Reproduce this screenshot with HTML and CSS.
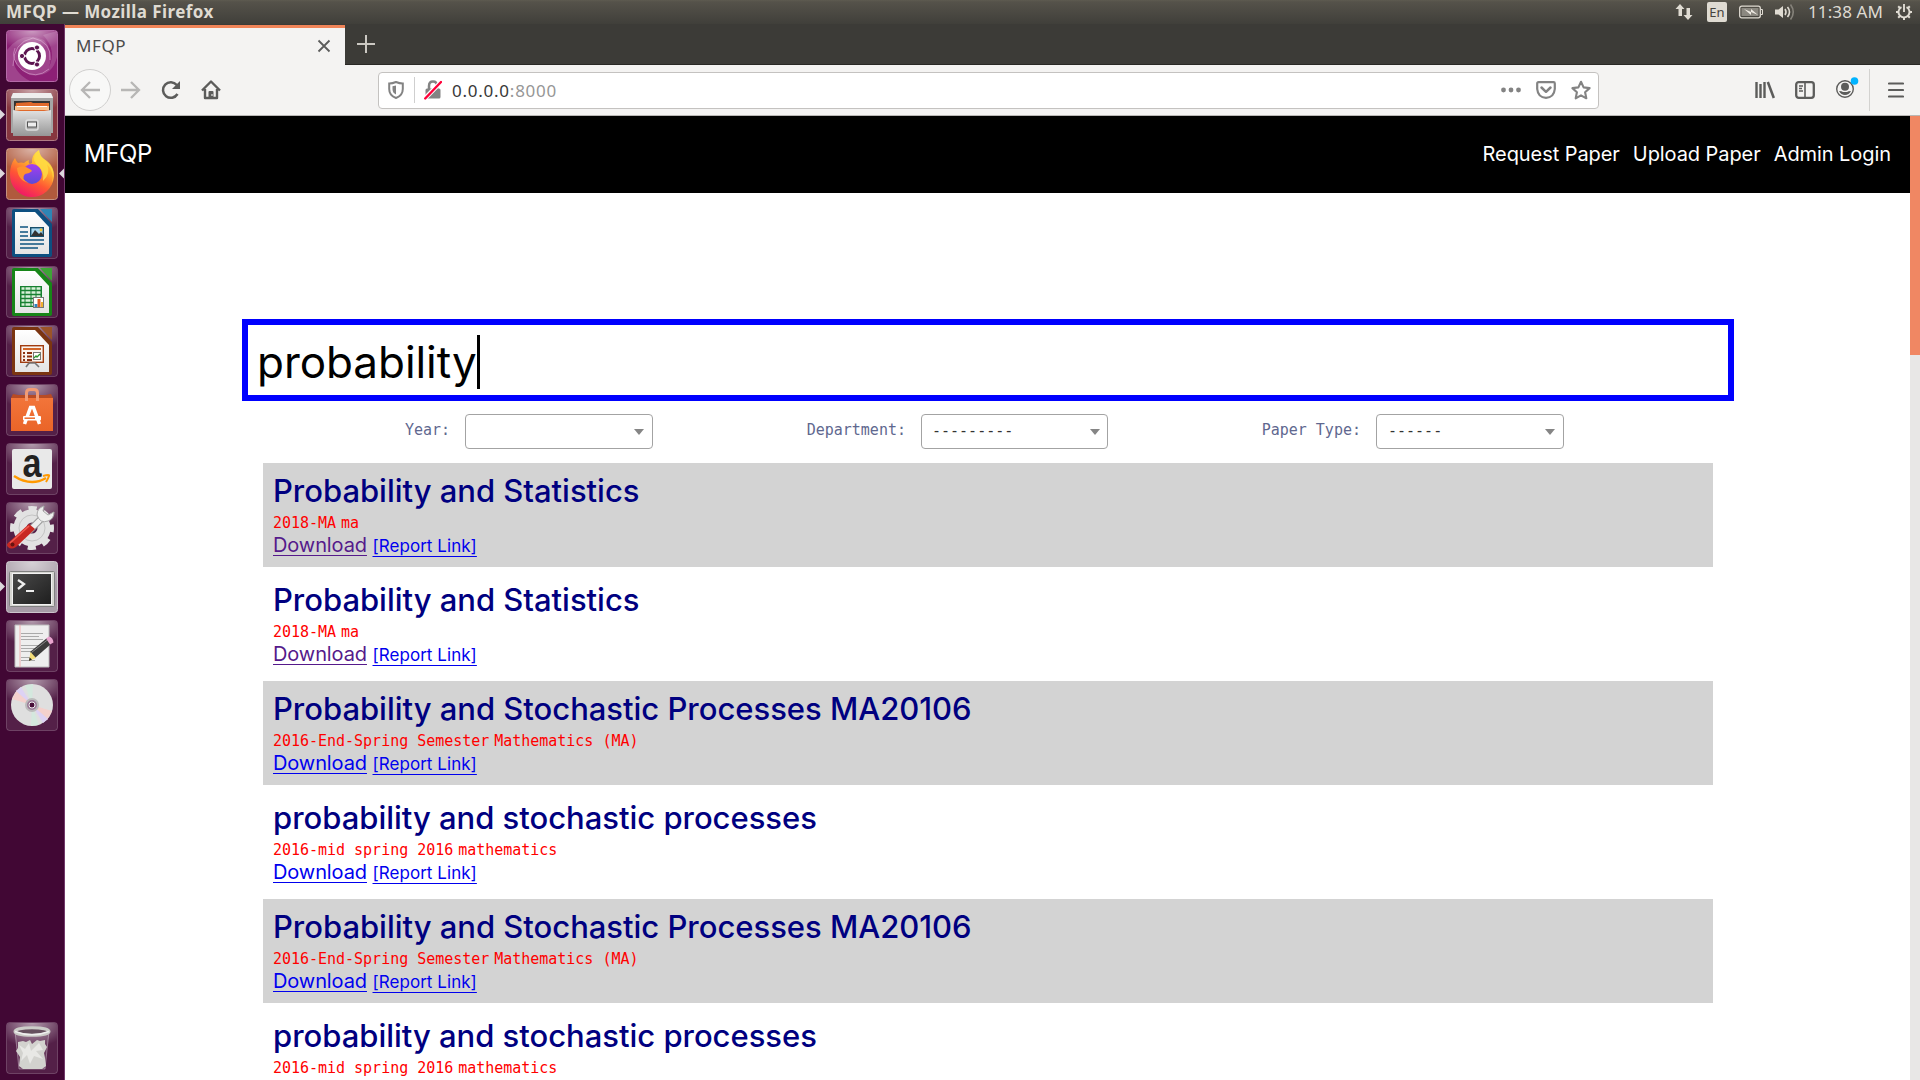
FILE: index.html
```html
<!DOCTYPE html>
<html lang="en">
<head>
<meta charset="utf-8">
<title>MFQP</title>
<link rel="stylesheet" href="styles.css">
</head>
<body>
<svg class="defs" width="0" height="0" aria-hidden="true">
  <defs>
    <radialGradient id="gloss" cx=".5" cy="0" r=".75"><stop offset="0" stop-color="#fff" stop-opacity=".55"/><stop offset="1" stop-color="#fff" stop-opacity="0"/></radialGradient>
    <linearGradient id="silver" x1="0" y1="0" x2="0" y2="1"><stop offset="0" stop-color="#e2e2e2"/><stop offset="1" stop-color="#969696"/></linearGradient>
    <linearGradient id="paper" x1="0" y1="0" x2="0" y2="1"><stop offset="0" stop-color="#fff"/><stop offset="1" stop-color="#e4e4e4"/></linearGradient>
    <linearGradient id="flame" x1=".8" y1="0" x2=".3" y2="1"><stop offset="0" stop-color="#fff44f"/><stop offset=".35" stop-color="#ffb02e"/><stop offset=".65" stop-color="#ff5634"/><stop offset="1" stop-color="#f0146a"/></linearGradient>
    <linearGradient id="globe" x1="0" y1="0" x2="0" y2="1"><stop offset="0" stop-color="#a63df0"/><stop offset="1" stop-color="#5a4bd8"/></linearGradient>
    <linearGradient id="bag" x1="0" y1="0" x2="0" y2="1"><stop offset="0" stop-color="#f2753a"/><stop offset="1" stop-color="#ea6428"/></linearGradient>
    <linearGradient id="screen" x1="0" y1="0" x2="1" y2="1"><stop offset="0" stop-color="#4a4a4a"/><stop offset="1" stop-color="#1e1e1e"/></linearGradient>
    <g id="tile"><rect x="6.5" y=".5" width="51" height="51" rx="3" fill="#fff" fill-opacity=".1" stroke="#fff" stroke-opacity=".2"/><rect x="7" y="1" width="50" height="32" rx="3" fill="url(#gloss)"/></g>
    <g id="running"><path d="M0 20.500 5 25.500 0 30.500z" fill="#dcd8dc"/></g>
  </defs>
</svg>

<header class="panel">
  <span class="panel-title">MFQP — Mozilla Firefox</span>
  <div class="indicators">
    <svg class="ind-net" width="18" height="18" viewBox="0 0 18 18"><path d="M0.500 6 5 1l4.500 5H7v7H3.500V6zM8.500 12 13 17l4.500-5H15V5h-3.500v7z" fill="#dfdbd2"/></svg>
    <span class="ind-lang">En</span>
    <svg class="ind-battery" width="24" height="14" viewBox="0 0 24 14"><rect x=".7" y="1.200" width="20.600" height="11.600" rx="2" fill="none" stroke="#dfdbd2" stroke-width="1.300"/><rect x="2.500" y="3" width="17" height="8" fill="#8b8880"/><path d="M22 4.500h1.500v5H22" fill="none" stroke="#dfdbd2"/><path d="m5 4 7 3V4l7 6-7-3v3z" fill="#eeeae2"/></svg>
    <svg class="ind-sound" width="21" height="18" viewBox="0 0 21 18"><path d="M0 6.500h3.500L8 3v12l-4.500-3.500H0z" fill="#dfdbd2"/><path d="M10 6q2 3 0 6M12.500 4q4 5 0 10" fill="none" stroke="#dfdbd2" stroke-width="1.600"/><path d="M15.500 1.500q5.500 7.500 0 15" fill="none" stroke="#85827a" stroke-width="1.600"/></svg>
    <span class="ind-clock">11:38 AM</span>
    <svg class="ind-gear" width="18" height="18" viewBox="0 0 18 18" fill="none" stroke="#dfdbd2"><path d="M6.500 4.100a5.500 5.500 0 1 0 5 0" stroke-width="1.900"/><path d="M9 1v8" stroke-width="1.900"/><path d="M1 9h2.500M14.500 9H17M9 14.500V17M3.200 3.200l2 2M14.800 3.200l-2 2M3.200 14.800l2-2M14.800 14.800l-2-2" stroke-width="2"/></svg>
  </div>
</header>

<div class="desktop">
  <nav class="launcher">
    <!-- Dash -->
    <svg viewBox="0 0 64 52"><rect x="6.500" y=".5" width="51" height="51" rx="3" fill="#8d2076" stroke="#b56aa8"/><path d="M7 20Q22 0 44 10 54 22 49 37 57 20 43 5L57 1v26Q52 48 30 45 16 39 13 25 12 42 30 51H7z" fill="#fff" opacity=".16"/><path d="M13 36Q13 12 33 8 52 12 50 30M49 39Q36 50 22 40 10 29 15 18" fill="none" stroke="#dca4d2" opacity=".6"/><rect x="7" y="1" width="50" height="25" rx="3" fill="url(#gloss)"/><circle cx="32" cy="26" r="14" fill="#fff"/><circle cx="32" cy="26" r="7.500" fill="none" stroke="#5c1450" stroke-width="3"/><path d="M32 26H20M32 26l6-10M32 26l6 10" stroke="#fff" stroke-width="1.500"/><circle cx="32" cy="26" r="5.500" fill="#fff"/><g fill="#5c1450" stroke="#fff"><circle cx="22" cy="26" r="2.600"/><circle cx="37" cy="17.500" r="2.600"/><circle cx="37" cy="34.500" r="2.600"/></g></svg>
    <!-- Files -->
    <svg viewBox="0 0 64 52"><rect x="6.500" y=".5" width="51" height="51" rx="3" fill="#87363f" stroke="#b07c84"/><rect x="7" y="1" width="50" height="30" fill="url(#gloss)"/><path d="M13 4h38l2 4v36H11V8z" fill="#a5a5a5"/><path d="M13 4h38l2 5H11z" fill="#eee"/><rect x="14" y="12" width="36" height="10" fill="#333"/><path d="m16 14 15-1 2 1h16v8H15z" fill="#e0692b"/><path d="M15 17h34v4H15z" fill="#f8c08c"/><path d="M17 17.500h30" stroke="#fff"/><path d="m13 21 7 1h24l7-1v26H13z" fill="url(#silver)"/><rect x="26" y="31" width="12" height="10" rx="2" fill="none" stroke="#ddd" stroke-width="1.500"/><rect x="27.500" y="33" width="9" height="5" fill="#eee" stroke="#555"/><use href="#running"/></svg>
    <!-- Firefox -->
    <svg viewBox="0 0 64 52"><rect x="6.500" y=".5" width="51" height="51" rx="3" fill="#b05a3d" stroke="#c4917f"/><rect x="7" y="1" width="50" height="30" fill="url(#gloss)"/><path d="M15 10q1 3 3 5 3-1 6 0 2-2 5-3-1 3 1 4l2-1q-1-8 7-13 1 7 6 10 9 8 9 16A22 22 0 0 1 10 26q0-9 5-16z" fill="url(#flame)"/><circle cx="32" cy="26" r="10" fill="url(#globe)"/><path d="M17 20q5-3 9-1 6 3 6 4-3 3-7 3-5 5 4 9-11-2-12-15z" fill="#ff922e"/><path d="M38 3q-7 6-2 13 9 7 7 17 8-7 4-17 8 8 5 19 5-14-5-22-8-5-9-10z" fill="#ffdb42" opacity=".85"/><use href="#running"/><path d="m64 20.500-5 5 5 5z" fill="#dcd8dc"/></svg>
    <!-- Writer -->
    <svg viewBox="0 0 64 52"><use href="#tile"/><path d="M14 2h24l14 15v31q0 2-2 2H14q-2 0-2-2V4q0-2 2-2z" fill="#0d4f80"/><path d="M40 2h12v13z" fill="#2e85b5"/><path d="M15 5h20l14 15v27H15z" fill="url(#paper)"/><path d="M20 20h8M20 25h8M20 29h8M20 33h24M20 37h24M20 41h18" stroke="#0e5480" stroke-width="1.700"/><rect x="30.700" y="20.700" width="12.600" height="8.600" fill="#a7d8f0" stroke="#174f6b" stroke-width="1.400"/><path d="m31 29 4-6 4 4 2-2 3 4z" fill="#333"/><circle cx="41" cy="23" r="1.400" fill="#f6c532"/></svg>
    <!-- Calc -->
    <svg viewBox="0 0 64 52"><use href="#tile"/><path d="M14 2h24l14 15v31q0 2-2 2H14q-2 0-2-2V4q0-2 2-2z" fill="#178518"/><path d="M40 2h12v13z" fill="#3ea436"/><path d="M15 5h20l14 15v27H15z" fill="url(#paper)"/><path d="M20 20h22v21H20z" fill="#178030"/><path d="M21.500 22.500h19M21.500 26.500h19M21.500 30.500h19M21.500 34.500h19M21.500 38.500h19" stroke="#d8f0d8" stroke-width="2.500"/><path d="M25 20v20M31 20v20M36 20v20" stroke="#178030"/><rect x="33.500" y="31.500" width="10" height="10" fill="#fff" stroke="#777"/><path d="M36 38v3" stroke="#2e83c0" stroke-width="3"/><path d="M39 33v8" stroke="#e05a20" stroke-width="3"/><path d="M42 36v5" stroke="#f0b030" stroke-width="2"/></svg>
    <!-- Impress -->
    <svg viewBox="0 0 64 52"><use href="#tile"/><path d="M14 2h24l14 15v31q0 2-2 2H14q-2 0-2-2V4q0-2 2-2z" fill="#7b3511"/><path d="M40 2h12v13z" fill="#9b5428"/><path d="M15 5h20l14 15v27H15z" fill="url(#paper)"/><rect x="20.700" y="20.700" width="22.600" height="16.600" fill="#faf4ee" stroke="#a13c10" stroke-width="1.400"/><path d="M23 24h18" stroke="#d26528" stroke-width="2"/><path d="M23 28h2M27 28h5M23 31.500h2M27 31.500h5M23 35h2M27 35h5" stroke="#8b3210" stroke-width="2"/><rect x="33.500" y="27.500" width="7" height="7" fill="#fff" stroke="#777"/><path d="m34 33 2-2 1 1 3-3" stroke="#29952d" fill="none" stroke-width="1.300"/><path d="M29 38h6l4 4M29 38l-3 4" stroke="#777" fill="none" stroke-width="1.700"/></svg>
    <!-- Ubuntu Software -->
    <svg viewBox="0 0 64 52"><use href="#tile"/><path d="m13 10 5 1h28l5-1 2 4H11z" fill="#b84b24"/><path d="M11 14h42v33H11z" fill="url(#bag)"/><path d="M26.500 17V9q0-3.500 3.500-3.500h4q3.500 0 3.500 3.500v8" fill="none" stroke="#f29b74" stroke-width="3"/><path d="m24.500 40 6-16.500h3l6 16.500" fill="none" stroke="#fff" stroke-width="3.500"/><rect x="23" y="32" width="18" height="4.500" rx="1" fill="#fff"/><path d="M24.500 34.200H35" stroke="#ed6b2d" stroke-width="1.500"/></svg>
    <!-- Amazon -->
    <svg viewBox="0 0 64 52"><use href="#tile"/><rect x="12" y="6" width="40" height="40" rx="2" fill="#e9e9e9"/><text x="32" y="34" text-anchor="middle" textLength="19" lengthAdjust="spacingAndGlyphs" class="amazon-letter">a</text><path d="M14 33q17 11 32 2" fill="none" stroke="#f90" stroke-width="2.500"/><path d="M43 33q7-2 6 0-1 3-3 6" fill="none" stroke="#f90" stroke-width="2"/></svg>
    <!-- Settings -->
    <svg viewBox="0 0 64 52"><use href="#tile"/><circle cx="32" cy="26" r="12" fill="none" stroke="#e2e2e2" stroke-width="13"/><circle cx="32" cy="26" r="19" fill="none" stroke="#e2e2e2" stroke-width="6" stroke-dasharray="8 6.920" stroke-dashoffset="4"/><circle cx="32" cy="26" r="13" fill="none" stroke="#c4c4c4"/><path d="m29 29 13-13" stroke="#999" stroke-width="7"/><path d="m27 31 15-15" stroke="#eee" stroke-width="5"/><path d="M44 4q-7 2-7 9 3 9 11 6 6-2 6-9l-6 3-5-4z" fill="#eee" stroke="#aaa"/><path d="m8 41 21-19 6 5-19 18q-5 3-8 0-2-2 0-4z" fill="#c82822"/><path d="m10 41 19-17" stroke="#f05b50" stroke-width="1.600"/><circle cx="12.500" cy="42.500" r="2" fill="#681310"/></svg>
    <!-- Terminal -->
    <svg viewBox="0 0 64 52"><rect x="6.500" y=".5" width="51" height="51" rx="3" fill="#a69ba6" stroke="#ccc4cc"/><rect x="7" y="1" width="50" height="40" fill="url(#gloss)"/><rect x="9.500" y="10.500" width="45" height="35" rx="1" fill="#d6d6d2" stroke="#808080"/><rect x="12.500" y="12.500" width="39" height="31" fill="url(#screen)" stroke="#f2f2f2"/><path d="m18 19 6 4-6 5" fill="none" stroke="#eee" stroke-width="2.300"/><path d="M26 30h8" stroke="#eee" stroke-width="2"/><use href="#running"/></svg>
    <!-- Text editor -->
    <svg viewBox="0 0 64 52"><use href="#tile"/><path d="M15 5h34v42H15z" fill="#eee" stroke="#bbb"/><path d="M20 5v42" stroke="#f0b0b0"/><path d="M21 13.500h22M21 16.500h18M21 19.500h22M21 25.500h20M21 28.500h20M21 31.500h14M21 37.500h12M21 40.500h14" stroke="#aaa"/><path d="m30 32 17-14 4 6-16 14z" fill="#3c3c3c"/><path d="m31.500 32.500 16.500-13" stroke="#888"/><path d="m29 41 1.500-9 5.500 6z" fill="#f3dd78"/><path d="m29 41 .6-3.500 2.400 2z" fill="#222"/><path d="m46 18.500 3-2q4 1 4.500 6l-3.500 2z" fill="#e9a4cf"/></svg>
    <!-- Disc -->
    <svg viewBox="0 0 64 52"><use href="#tile"/><circle cx="32" cy="26" r="21" fill="#dfdfdf"/><path d="M32 26 12 20l5-9zM32 26l20 6-5 9z" fill="#f4d1cd"/><path d="m32 26-7-20 8-1zM32 26l7 20-8 1z" fill="#cdeedd" opacity=".6"/><path d="M32 26 16 12l5-4zM32 26l16 14-5 4z" fill="#ddd2f4"/><circle cx="32" cy="26" r="6" fill="#9b7b98" stroke="#bbb" stroke-width="2"/><circle cx="32" cy="26" r="3" fill="#481038" stroke="#eee"/></svg>
    <!-- Trash -->
    <svg class="trash" viewBox="0 0 64 52"><use href="#tile"/><path d="M15 9h34l-4 38H19z" fill="#fff" fill-opacity=".13" stroke="#fff" stroke-opacity=".35"/><path d="m18 20 5-1 3 1 4-2 2 4 5-4 3 1 5-1v4l2 3-3 6 1 5 1 8-4 3H23l-4-3 1-9-4-6 2-3z" fill="#d2d2ce"/><path d="m19 23 6 4 4-6 2 8 8-8 4 7-7 1 7 8-9-3-4 8-3-9-6 6 2-8z" fill="#e8e8e5"/><ellipse cx="32" cy="9.500" rx="17" ry="3.800" fill="#66505f" stroke="#ccccc8" stroke-width="3"/><path d="M15 9.500Q32 16 49 9.500" fill="none" stroke="#eee" stroke-width="1.500"/></svg>
  </nav>

  <main class="browser">
    <div class="tabbar">
      <div class="tab"><span>MFQP</span><svg width="14" height="14" viewBox="0 0 14 14"><path d="m1.500 1.500 11 11m0-11-11 11" stroke="#5c5c5b" stroke-width="1.800"/></svg></div>
      <svg class="newtab" width="18" height="18" viewBox="0 0 18 18"><path d="M9 0v18M0 9h18" stroke="#cbc8c2" stroke-width="2"/></svg>
    </div>
    <div class="toolbar">
      <div class="nav-buttons">
        <span class="back"><svg width="20" height="20" viewBox="0 0 20 20"><path d="M20 10H2m8-8-8 8 8 8" fill="none" stroke="#b7b6b5" stroke-width="2.300"/></svg></span>
        <svg width="20" height="20" viewBox="0 0 20 20"><path d="M0 10h18m-8-8 8 8-8 8" fill="none" stroke="#b7b6b5" stroke-width="2.300"/></svg>
        <svg width="20" height="20" viewBox="0 0 20 20"><path d="M16.500 14A7.800 7.800 0 1 1 15.800 5" fill="none" stroke="#5c5c5b" stroke-width="2.500"/><path d="M19 1v8h-8z" fill="#5c5c5b"/></svg>
        <svg width="20" height="20" viewBox="0 0 20 20"><path d="M1 10.500 10 1.500l9 9M4 9v9h12V9" fill="none" stroke="#5c5c5b" stroke-width="2.400" stroke-linejoin="round"/><path d="M7.500 18v-6q0-1 1-1h3q1 0 1 1v6z" fill="#5c5c5b"/><path d="M10.500 14h1v2h-1z" fill="#fff"/></svg>
      </div>
      <div class="urlbar">
        <svg class="shield" width="16" height="18" viewBox="0 0 16 18"><path d="M8 1q3.500 1.500 6.800 1.500V8q0 6.500-6.800 9Q1.200 14.500 1.200 8V2.500Q4.500 2.500 8 1z" fill="none" stroke="#838383" stroke-width="2"/><path d="M8 4.500v9Q4.500 12 4.500 8V5.200z" fill="#838383"/></svg>
        <span class="url-divider"></span>
        <svg class="lock" width="18" height="20" viewBox="0 0 18 20"><path d="M5 9V6q0-4.500 4-4.500T13 6v3" fill="none" stroke="#838383" stroke-width="2.500"/><rect x="1.500" y="8.500" width="15" height="10" rx="1.500" fill="#838383"/><path d="M.8 18.500 17 2" stroke="#fff" stroke-width="4.500"/><path d="M1.200 18.500 17 2" stroke="#ff0039" stroke-width="2.400" stroke-linecap="round"/></svg>
        <span class="url">0.0.0.0<i>:8000</i></span>
        <svg class="dots" width="20" height="6" viewBox="0 0 20 6" fill="#838383"><circle cx="2.500" cy="3" r="2.400"/><circle cx="10" cy="3" r="2.400"/><circle cx="17.500" cy="3" r="2.400"/></svg>
        <svg class="pocket" width="20" height="18" viewBox="0 0 20 18"><path d="M2.500 1.200h15q1.300 0 1.300 1.300V8Q18 16.500 10 16.800 2 16.500 1.200 8V2.500q0-1.300 1.300-1.300z" fill="none" stroke="#838383" stroke-width="2.200"/><path d="m5.500 6.500 4.500 4.300 4.500-4.300" fill="none" stroke="#838383" stroke-width="2.500" stroke-linecap="round" stroke-linejoin="round"/></svg>
        <svg width="20" height="20" viewBox="0 0 20 20"><path d="m10 1.800 2.600 5.600 6 .7-4.500 4.100 1.200 6.100-5.300-3-5.300 3 1.200-6.100L1.400 8.100l6-.7z" fill="none" stroke="#838383" stroke-width="2.100" stroke-linejoin="round"/></svg>
      </div>
      <div class="tools">
        <svg width="20" height="18" viewBox="0 0 20 18"><path d="M1.500 1v16M5.500 3v14M9.500 1v16" stroke="#5c5c5b" stroke-width="2.400"/><path d="m12.800 1 6 16" stroke="#5c5c5b" stroke-width="2.500"/></svg>
        <svg width="20" height="18" viewBox="0 0 20 18"><rect x="1.200" y="1.200" width="17.600" height="15.600" rx="2.500" fill="none" stroke="#5c5c5b" stroke-width="2.300"/><path d="M10 1v16" stroke="#5c5c5b" stroke-width="1.600"/><path d="M4 5h4M4 7.500h3M4 10h4" stroke="#5c5c5b" stroke-width="1.300"/></svg>
        <svg class="account" width="24" height="24" viewBox="0 0 24 24"><circle cx="10" cy="13" r="8.300" fill="none" stroke="#5c5c5b" stroke-width="1.400"/><circle cx="10" cy="10.700" r="4" fill="#5c5c5b"/><path d="M4 15q3 .2 4 1h4q1-.8 4-1-2 4-6 4t-6-4z" fill="#5c5c5b"/><circle cx="19.500" cy="5" r="3.800" fill="#00b3ff"/></svg>
        <span class="tool-divider"></span>
        <svg width="16" height="16" viewBox="0 0 16 16"><path d="M1 1.500h14M1 8h14M1 14.500h14" stroke="#5c5c5b" stroke-width="2.200" stroke-linecap="round"/></svg>
      </div>
    </div>

    <div class="viewport">
      <div class="page">
        <div class="site-header">
          <a class="brand">MFQP</a>
          <nav class="site-nav"><a>Request Paper</a><a>Upload Paper</a><a>Admin Login</a></nav>
        </div>
        <div class="search"><span>probability</span><b class="caret"></b></div>
        <div class="filters">
          <div class="filter"><label>Year:</label><div class="select"><span></span><i></i></div></div>
          <div class="filter"><label>Department:</label><div class="select"><span>---------</span><i></i></div></div>
          <div class="filter"><label>Paper Type:</label><div class="select"><span>------</span><i></i></div></div>
        </div>
        <div class="results">
          <article class="paper"><h2>Probability and Statistics</h2><p><code>2018-MA</code> <code>ma</code></p><div class="links"><a class="visited">Download</a> <a class="report">[Report Link]</a></div></article>
          <article class="paper"><h2>Probability and Statistics</h2><p><code>2018-MA</code> <code>ma</code></p><div class="links"><a class="visited">Download</a> <a class="report">[Report Link]</a></div></article>
          <article class="paper"><h2>Probability and Stochastic Processes MA20106</h2><p><code>2016-End-Spring Semester</code> <code>Mathematics (MA)</code></p><div class="links"><a>Download</a> <a class="report">[Report Link]</a></div></article>
          <article class="paper"><h2>probability and stochastic processes</h2><p><code>2016-mid spring 2016</code> <code>mathematics</code></p><div class="links"><a>Download</a> <a class="report">[Report Link]</a></div></article>
          <article class="paper"><h2>Probability and Stochastic Processes MA20106</h2><p><code>2016-End-Spring Semester</code> <code>Mathematics (MA)</code></p><div class="links"><a>Download</a> <a class="report">[Report Link]</a></div></article>
          <article class="paper"><h2>probability and stochastic processes</h2><p><code>2016-mid spring 2016</code> <code>mathematics</code></p></article>
        </div>
      </div>
      <div class="scrollbar"><div class="thumb"></div></div>
    </div>
  </main>
</div>
</body>
</html>
```
FILE: styles.css
```css
* { box-sizing: border-box; }
body {
  margin: 0;
  width: 1920px;
  height: 1080px;
  overflow: hidden;
  display: flex;
  flex-direction: column;
  font-family: "Noto Sans", sans-serif;
  background: #fff;
}
svg { display: block; flex: none; }
.defs { position: absolute; }

/* System panel */
.panel {
  flex: none;
  height: 24px;
  display: flex;
  align-items: center;
  justify-content: space-between;
  padding: 0 7px 0 6px;
  background: linear-gradient(#5e5b50, #55524a 8%, #403f3a);
  color: #dfdbd2;
}
.panel-title { font-size: 17px; font-weight: 700; line-height: 24px; letter-spacing: .42px; white-space: nowrap; }
.indicators { display: flex; align-items: center; }
.ind-net { margin-right: 1px; }
.ind-lang {
  width: 20px; height: 20px; margin: 0 12px 0 13px;
  border-radius: 2px; background: #dfdbd2; color: #45433e;
  font-size: 13px; line-height: 21px; text-align: center;
}
.ind-sound { margin-left: 12px; }
.ind-clock { width: 75px; margin: 0 12px 0 12px; font-size: 17px; line-height: 24px; letter-spacing: .1px; white-space: nowrap; }

/* Launcher */
.desktop { flex: 1; display: flex; min-height: 0; }
.launcher {
  flex: none; width: 65px; height: 1056px; padding: 6px 0;
  display: flex; flex-direction: column; gap: 7px;
  background: #410734; border-right: 1px solid #72396a;
}
.launcher svg { width: 64px; height: 52px; overflow: visible; }
.launcher .trash { margin-top: auto; }
.amazon-letter { font: 700 40px "Liberation Sans", sans-serif; fill: #222; }

/* Browser chrome */
.browser { flex: 1; display: flex; flex-direction: column; min-width: 0; }
.tabbar { flex: none; height: 41px; display: flex; background: #3c3b37; border-bottom: 1px solid #292825; }
.tab {
  width: 280px; height: 41px; margin-top: 1px; padding: 0 14px 3px 11px;
  display: flex; align-items: center; justify-content: space-between;
  background: #f4f3f2; border-top: 3px solid #f08458;
  color: #4b4b4b; font-size: 17px; letter-spacing: .6px;
}
.newtab { margin: 11px 0 0 12px; }
.toolbar {
  flex: none; height: 51px; padding: 0 16px 0 4px;
  display: flex; align-items: center;
  background: #f4f3f2; border-bottom: 1px solid #b9b7b5;
}
.nav-buttons { display: flex; align-items: center; gap: 20px; width: 309px; }
.back {
  width: 42px; height: 42px; margin-right: -10px;
  display: flex; align-items: center; justify-content: center;
  border: 1px solid #d0cfce; border-radius: 50%; background: #f8f8f7;
}
.urlbar {
  width: 1221px; height: 37px; padding: 0 7px 0 9px;
  display: flex; align-items: center;
  border: 1px solid #c4c2c0; border-radius: 4px; background: #fff;
}
.url-divider { width: 1px; height: 26px; margin: 0 9px 0 10px; background: #cfcfcf; }
.url { margin-left: 10px; flex: 1; color: #383838; font-size: 17px; letter-spacing: .75px; }
.url i { font-style: normal; color: #969696; }
.pocket { margin: 0 15px; }
.tools { display: flex; align-items: center; margin-left: auto; gap: 20px; }
.account { margin: -5px 0 0 0; }
.tool-divider { width: 1px; height: 42px; margin: 0 -2px 0 -10px; background: #d3d2d0; }

/* Page */
.viewport { flex: 1; display: flex; min-height: 0; }
.page { flex: 1; min-width: 0; height: 964px; overflow: hidden; font-family: Inter, sans-serif; }
.scrollbar { width: 10px; background: #e8e7e6; }
.thumb { height: 239px; background: #f08763; }
.site-header {
  height: 77px; padding: 0 19px 2px;
  display: flex; align-items: center; justify-content: space-between;
  background: #000; color: #fff;
}
.brand { font-size: 24px; letter-spacing: -.4px; }
.site-nav { display: flex; gap: 13px; font-size: 20px; letter-spacing: -.07px; }
.search {
  width: 1492px; height: 82px; margin: 126px 0 0 177px; padding: 3px 10px 0 9px;
  display: flex; align-items: center;
  border: 6px solid #00f; font-size: 44px; letter-spacing: -.05px;
}
.caret { width: 3px; height: 54px; background: #000; }
.filters {
  height: 62px; margin: 0 171px 0 340px; padding-top: 13px;
  display: flex;
}
.filter { display: flex; width: 455px; gap: 15px; }
.filter label { width: 116px; text-align: right; }
.filter:first-child label { width: 45px; }
.filter:first-child { width: 385px; }
.filter label, .select { font: 15px/33px "DejaVu Sans Mono", monospace; color: #5f688f; white-space: nowrap; }
.filter label { flex: none; }
.select {
  width: 188px; height: 35px; padding: 0 8px 0 11px;
  display: flex; align-items: center; justify-content: space-between;
  border: 1px solid #a3a3a3; border-radius: 4px; color: #333;
}
.filter:nth-child(2) .select { width: 187px; padding: 0 7px 0 10px; }
.select i { border: 5px solid transparent; border-top: 6px solid #858585; border-bottom: 0; }
.results { margin: 0 197px 0 198px; display: grid; gap: 5px; }
.paper { height: 104px; padding: 8px 10px 7px; color: #000080; }
.paper:nth-child(odd) { background: #d3d3d3; }
.paper h2 { margin: 0; font-size: 31px; line-height: 39px; font-weight: 500; letter-spacing: -.02px; white-space: nowrap; }
.paper p { margin: 0; font-size: 16px; line-height: 24px; height: 24px; color: #f00; word-spacing: .5px; }
.paper code { font: 15px/24px "DejaVu Sans Mono", monospace; word-spacing: 0; letter-spacing: -.02px; }
.links { font-size: 20px; line-height: 23px; letter-spacing: -.1px; }
.links a { color: #00e; text-decoration: underline; text-decoration-thickness: 1px; text-underline-offset: 3px; }
.links .visited { color: #551a8b; }
.links .report { font-size: 17px; letter-spacing: .05px; color: #00e; text-underline-offset: 4px; }
```
